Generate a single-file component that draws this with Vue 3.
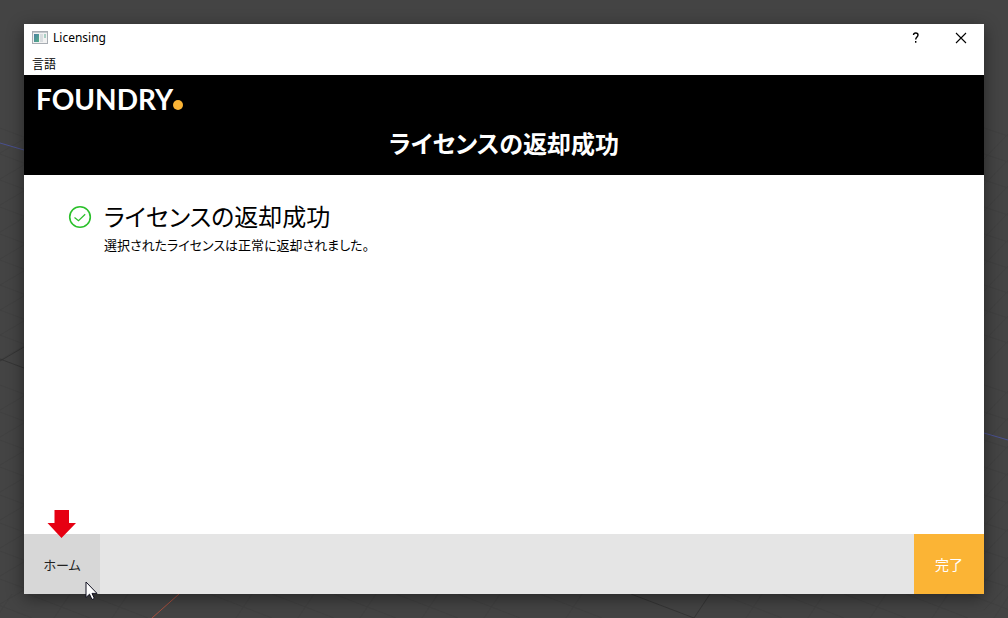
<template>
  <div class="desktop">
    <svg class="viewport-grid" viewBox="0 0 1008 618" preserveAspectRatio="none" aria-hidden="true">
      <g class="grid-line">
        <path v-for="y in gridRows" :key="'l' + y" :d="`M0 ${y}L24 ${y + 9}M0 ${y + 25}L24 ${y + 11}`" />
        <path v-for="y in gridRows" :key="'r' + y" :d="`M984 ${y}L1008 ${y + 8}M984 ${y + 31}L1008 ${y + 6}`" />
        <path v-for="x in gridColumns" :key="'b' + x" :d="`M${x} 594L${x + 62} 618M${x + 42} 594L${x + 26} 618`" />
      </g>
      <path class="grid-line strong" d="M0 361L24 347M0 359L24 368M631 594L694 618L710 594" />
      <path class="axis-y" d="M0 143L24 150M984 433L1008 440" />
      <path class="axis-x" d="M179 594L152 618" />
    </svg>

    <main class="window">
      <div class="title-bar">
        <svg class="app-icon" width="16" height="14" viewBox="0 0 16 14" aria-hidden="true">
          <defs>
            <linearGradient id="app-pane" x1="0" y1="0" x2="1" y2="1">
              <stop offset="0" stop-color="#4b80a3" />
              <stop offset="1" stop-color="#55ae87" />
            </linearGradient>
          </defs>
          <rect x="0.5" y="0.5" width="15" height="12" fill="#f2f2f2" stroke="#a8adb3" />
          <path d="M1 1.5H15" stroke="#c5c9ce" />
          <rect x="2" y="3" width="5" height="8" fill="url(#app-pane)" />
          <rect x="8" y="3" width="3" height="8" fill="#d9dde0" />
          <rect x="12" y="3" width="2" height="4" fill="#a9cfc4" />
        </svg>
        <span class="title">Licensing</span>
        <button class="caption-button" type="button" aria-label="Help">
          <svg width="8" height="12" viewBox="0 0 8 12" aria-hidden="true">
            <path d="M1.5 3C1.6 1.6 2.5 1 3.7 1C5.2 1 6 1.8 6 3C6 4.8 3.7 5.1 3.7 7.5" />
            <path d="M3.7 9V10.8" />
          </svg>
        </button>
        <button class="caption-button close" type="button" aria-label="Close">
          <svg width="12" height="12" viewBox="0 0 12 12" aria-hidden="true">
            <path d="M1 1L11 11M11 1L1 11" />
          </svg>
        </button>
      </div>

      <nav class="menu-bar">
        <button class="menu-item" type="button">言語</button>
      </nav>

      <header class="banner">
        <div class="logo">FOUNDRY<span class="logo-dot"></span></div>
        <h1>{{ heading }}</h1>
      </header>

      <section class="content">
        <svg class="status-icon" width="24" height="24" viewBox="0 0 24 24" aria-hidden="true">
          <circle cx="12" cy="12" r="10.3" stroke-width="1.6" />
          <path d="M6.5 12.5L10.5 15.8L17.2 9.2" stroke-width="1.2" />
        </svg>
        <div>
          <h2>{{ heading }}</h2>
          <p>選択されたライセンスは正常に返却されました。</p>
        </div>
      </section>

      <footer class="footer">
        <div class="home">
          <button class="home-button" type="button">ホーム</button>
          <svg class="arrow" width="30" height="28" viewBox="0 0 30 28" aria-hidden="true">
            <path d="M7.5 0H22V13H29L14.5 28L0.5 13H7.5Z" fill="#e60012" />
          </svg>
          <svg class="cursor" width="14" height="20" viewBox="0 0 14 20" aria-hidden="true">
            <path
              d="M1 1V16.5L4.5 13.2L7 18.5L9.4 17.4L7 12.4H12Z"
              fill="#fff"
              stroke="#101020"
            />
          </svg>
        </div>
        <button class="done-button" type="button">完了</button>
      </footer>
    </main>
  </div>
</template>

<script setup>
const heading = "ライセンスの返却成功";

const gridRows = [128, 154, 180, 207, 234, 260, 285, 310, 335, 385, 412, 440, 467, 495, 523, 551, 579];
const gridColumns = [-30, 28, 86, 210, 272, 334, 396, 458, 540, 720, 782, 844, 906, 968];
</script>

<style>
body {
  margin: 0;
}
</style>

<style scoped>
.desktop {
  position: relative;
  box-sizing: border-box;
  display: flex;
  min-height: 100vh;
  padding: 24px;
  overflow: hidden;
  background: #444;
  color: #000;
  font-family: "Noto Sans", "Noto Sans CJK JP", sans-serif;
}

.viewport-grid {
  position: absolute;
  inset: 0;
  width: 100%;
  height: 100%;
  fill: none;
}
.grid-line {
  stroke: #414141;
}
.grid-line.strong {
  stroke: #353535;
}
.axis-y {
  stroke: #4a5190;
}
.axis-x {
  stroke: #a8503f;
}

.window {
  position: relative;
  display: flex;
  flex: 1;
  flex-direction: column;
  background: #fff;
  box-shadow: 0 4px 16px rgba(0, 0, 0, 0.45);
}

button {
  border: none;
  padding: 0;
  font-family: inherit;
}

/* Title bar */
.title-bar {
  display: flex;
  align-items: center;
  height: 28px;
  padding-left: 8px;
}
.title {
  flex: 1;
  margin-left: 5px;
  font-size: 12px;
  line-height: 30px;
}
.caption-button {
  display: flex;
  align-items: center;
  justify-content: center;
  width: 45px;
  height: 28px;
  background: transparent;
}
.caption-button.close {
  width: 46px;
}
.caption-button svg {
  fill: none;
  stroke: #000;
  stroke-width: 1.4;
}
.caption-button.close svg {
  stroke-width: 1.1;
}

/* Menu */
.menu-bar {
  display: flex;
  height: 23px;
  padding-left: 8px;
}
.menu-item {
  background: transparent;
  color: #000;
  font-size: 12px;
  line-height: 26px;
}

/* Banner */
.banner {
  height: 100px;
  background: #000;
  color: #fff;
}
.logo {
  box-sizing: border-box;
  display: flex;
  align-items: baseline;
  height: 35px;
  padding: 10px 12px 0;
  font-family: Lato, sans-serif;
  font-size: 28px;
  font-weight: 700;
  line-height: 28px;
}
.logo-dot {
  width: 10px;
  height: 10px;
  border-radius: 50%;
  background: #fbb435;
}
h1,
h2,
p {
  margin: 0;
  font-feature-settings: "palt";
}
h1 {
  font-size: 24px;
  font-weight: 700;
  line-height: 68px;
  text-align: center;
}

/* Result */
.content {
  display: flex;
  flex: 1;
  align-items: flex-start;
  gap: 12px;
  padding: 24px 44px;
}
.status-icon {
  margin-top: 6px;
  fill: none;
  stroke: #2bc02b;
}
h2 {
  font-size: 24px;
  font-weight: 400;
  line-height: 36px;
}
p {
  font-size: 13px;
  line-height: 20px;
}

/* Footer */
.footer {
  display: flex;
  justify-content: space-between;
  height: 60px;
  background: #e5e5e5;
}
.home {
  position: relative;
  display: flex;
}
.home-button {
  width: 76px;
  background: #d7d7d7;
  color: #222;
  font-size: 13px;
  font-feature-settings: "palt";
}
.done-button {
  width: 70px;
  background: #fbb435;
  color: #fff;
  font-size: 14px;
}
.arrow {
  position: absolute;
  top: -24px;
  left: 23px;
}
.cursor {
  position: absolute;
  top: 47px;
  left: 61px;
}
</style>
